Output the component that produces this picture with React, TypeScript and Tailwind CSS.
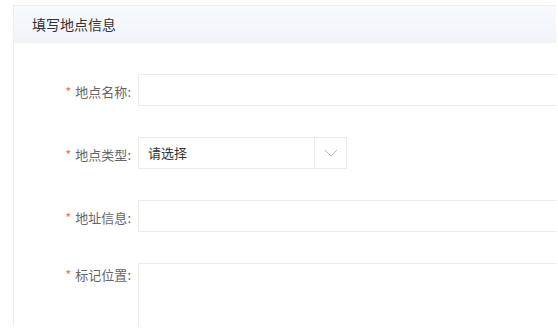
export default function App() {
  const font = { fontFamily: '"Microsoft YaHei", "Noto Sans CJK SC", "Liberation Sans", sans-serif' };

  const Label = ({ text }: { text: string }) => (
    <span className="text-[13px] text-[#666] whitespace-nowrap">
      <span className="text-[#f5754f] mr-[4px]">*</span>
      {text}:
    </span>
  );

  return (
    <div className="w-[558px] h-[328px] bg-white pt-[5px] pl-[13px] pb-[2px] overflow-hidden" style={font}>
      <div className="w-[543px] h-full border-l border-t border-[#eeeeee] overflow-hidden">
        <div className="h-[37px] flex items-center pl-[18px] bg-gradient-to-b from-[#f7faff] to-[#f0f3f7] text-[14px] text-[#333]">
          填写地点信息
        </div>

        <div className="pt-[31px] flex flex-col gap-[31px]">
          <div className="flex items-center">
            <div className="w-[118px] shrink-0 text-right pr-[1px]"><Label text="地点名称" /></div>
            <input className="ml-[6px] h-[32px] w-[600px] shrink-0 border border-[#ebebeb] outline-none" />
          </div>

          <div className="flex items-center">
            <div className="w-[118px] shrink-0 text-right pr-[1px]"><Label text="地点类型" /></div>
            <div className="ml-[6px] h-[32px] w-[209px] shrink-0 flex border border-[#ebebeb]">
              <div className="flex-1 flex items-center pl-[9px] text-[13px] text-[#333]">请选择</div>
              <div className="w-[32px] border-l border-[#ebebeb] flex items-center justify-center">
                <svg width="14" height="8" viewBox="0 0 14 8" fill="none">
                  <path d="M1 1L7 7L13 1" stroke="#b8b8b8" strokeWidth="1" />
                </svg>
              </div>
            </div>
          </div>

          <div className="flex items-center">
            <div className="w-[118px] shrink-0 text-right pr-[1px]"><Label text="地址信息" /></div>
            <input className="ml-[6px] h-[32px] w-[600px] shrink-0 border border-[#ebebeb] outline-none" />
          </div>

          <div className="flex items-start">
            <div className="w-[118px] shrink-0 text-right pr-[1px] leading-[20px]"><Label text="标记位置" /></div>
            <textarea className="ml-[6px] h-[120px] w-[600px] shrink-0 border border-[#ebebeb] outline-none resize-none" />
          </div>
        </div>
      </div>
    </div>
  );
}
